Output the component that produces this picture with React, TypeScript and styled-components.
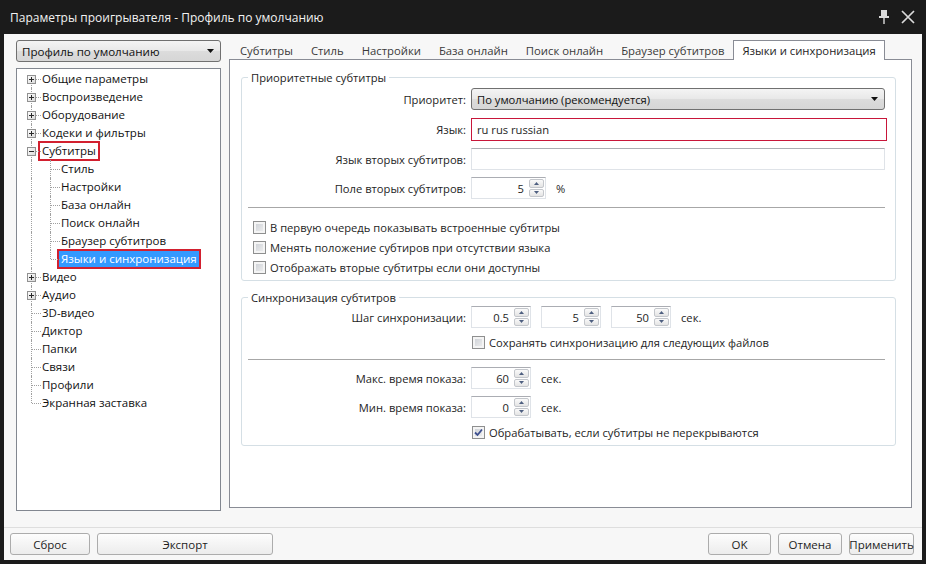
import React from 'react';
import styled, { createGlobalStyle } from 'styled-components';

const GlobalStyle = createGlobalStyle`
  html, body {
    margin: 0;
    padding: 0;
    background: #1b1b1b;
  }
  body {
    font-family: "Open Sans", "Noto Sans", sans-serif;
    font-size: 11.2px;
    color: #1e1e1e;
  }
  * {
    box-sizing: border-box;
  }
`;

const Window = styled.div`
  width: 926px;
  height: 564px;
  background: #1b1b1b;
  display: flex;
  flex-direction: column;
  padding: 0 4px 4px 4px;
`;

const TitleBar = styled.div`
  height: 34px;
  display: flex;
  align-items: center;
  padding: 0 7px 0 6px;
  color: #f2f2f2;
  font-size: 12px;
`;

const TitleText = styled.div`
  flex: 1;
`;

const TitleButtons = styled.div`
  display: flex;
  align-items: center;
  gap: 11px;
`;

const Body = styled.div`
  flex: 1;
  background: #f7f7f7;
  display: flex;
  flex-direction: column;
  min-height: 0;
`;

const Main = styled.div`
  flex: 1;
  display: flex;
  gap: 8px;
  padding: 6px 10px 16px 12px;
  min-height: 0;
`;

const LeftColumn = styled.div`
  width: 205px;
  display: flex;
  flex-direction: column;
  gap: 6px;
`;

const ComboBox = styled.div<{ $size?: number }>`
  height: 22px;
  width: 100%;
  border: 1px solid #707070;
  border-radius: 3px;
  background: linear-gradient(#f4f4f4, #e8e8e8 50%, #dcdcdc 50%, #d6d6d6);
  display: flex;
  align-items: center;
  padding: 0 6px 0 5px;
  font-size: ${p => p.$size || 11.2}px;
  color: #111;
`;

const ComboText = styled.span`
  flex: 1;
`;

const TreeBox = styled.div`
  flex: 1;
  background: #fff;
  border: 1px solid #828790;
  padding: 1px 0 0 5px;
`;

const TreeRow = styled.div`
  height: 18px;
  display: flex;
  align-items: center;
`;

type VLine = 'full' | 'top' | 'bottom' | 'none';

const Guide = styled.span<{ $v: VLine; $h?: boolean }>`
  width: 19px;
  height: 18px;
  flex: none;
  position: relative;

  &::before {
    content: '';
    display: ${p => (p.$v === 'none' ? 'none' : 'block')};
    position: absolute;
    left: 9px;
    top: ${p => (p.$v === 'bottom' ? '9px' : '0')};
    bottom: ${p => (p.$v === 'top' ? '9px' : '0')};
    border-left: 1px dotted #a0a0a0;
  }

  &::after {
    content: '';
    display: ${p => (p.$h ? 'block' : 'none')};
    position: absolute;
    left: 10px;
    right: 0;
    top: 9px;
    border-top: 1px dotted #a0a0a0;
  }
`;

const Expander = styled.svg`
  position: absolute;
  left: 5px;
  top: 5px;
  z-index: 1;
`;

const TreeLabel = styled.span<{ $selected?: boolean; $marked?: boolean }>`
  margin-left: -1px;
  padding: 0 2px;
  line-height: 16px;
  font-size: 11.5px;
  white-space: nowrap;
  color: ${p => (p.$selected ? '#fff' : '#111')};
  background: ${p => (p.$selected ? '#3399ff' : 'transparent')};
  outline: ${p => (p.$selected || p.$marked ? '2px solid #d2202f' : 'none')};
`;

const RightColumn = styled.div`
  flex: 1;
  display: flex;
  flex-direction: column;
  min-width: 0;
`;

const TabBar = styled.div`
  display: flex;
  height: 20px;
  margin: 0 0 -1px 2px;
  position: relative;
  z-index: 1;
`;

const Tab = styled.div<{ $active?: boolean }>`
  height: 20px;
  padding: 0 8px;
  display: flex;
  align-items: center;
  border: 1px solid ${p => (p.$active ? '#898c95' : 'transparent')};
  border-bottom: none;
  background: ${p => (p.$active ? '#fff' : 'transparent')};
  color: ${p => (p.$active ? '#1e1e1e' : '#3a3a3a')};
  font-size: 11.3px;
  white-space: nowrap;
`;

const ContentBox = styled.div`
  flex: 1;
  margin-bottom: 3px;
  background: #fff;
  border: 1px solid #898c95;
  padding: 9px 15px 0 11px;
`;

const Group = styled.fieldset<{ $top?: number }>`
  margin: ${p => p.$top || 0}px 0 0 0;
  padding: 0 10px 3px 6px;
  border: 1px solid #d5dfe5;
  border-radius: 3px;
  min-inline-size: 0;
`;

const Legend = styled.legend`
  padding: 0 3px;
  font-size: 11.2px;
  line-height: 17px;
  color: #1e1e1e;
`;

const FormRow = styled.div<{ $top?: number }>`
  display: grid;
  grid-template-columns: 218px 1fr;
  column-gap: 5px;
  align-items: center;
  height: 22px;
  margin-top: ${p => p.$top || 0}px;
`;

const FieldLabel = styled.span`
  text-align: right;
  white-space: nowrap;
`;

const TextField = styled.div<{ $alert?: boolean }>`
  height: ${p => (p.$alert ? '23px' : '22px')};
  margin-right: ${p => (p.$alert ? '-2px' : '0')};
  border: 1px solid ${p => (p.$alert ? '#c8163a' : '#dfe3e8')};
  border-top-color: ${p => (p.$alert ? '#c8163a' : '#abadb3')};
  background: #fff;
  display: flex;
  align-items: center;
  padding: 0 5px;
`;

const Inline = styled.div`
  display: flex;
  align-items: center;
  gap: 10px;
`;

const Spin = styled.div<{ $width: number }>`
  width: ${p => p.$width}px;
  height: 22px;
  border: 1px solid #dfe3e8;
  border-top-color: #abadb3;
  background: #fff;
  display: flex;
  align-items: center;
  padding: 1px;
`;

const SpinValue = styled.span`
  flex: 1;
  text-align: right;
  padding-right: 5px;
`;

const SpinButtons = styled.div`
  width: 15px;
  height: 100%;
  display: flex;
  flex-direction: column;
  gap: 1px;
`;

const SpinButton = styled.div`
  flex: 1;
  border: 1px solid #c3c6cb;
  border-radius: 2px;
  background: linear-gradient(#fafafa, #e4e4e4);
  display: flex;
  align-items: center;
  justify-content: center;
`;

const Unit = styled.span``;

const Separator = styled.div<{ $top: number }>`
  margin-top: ${p => p.$top}px;
  border-top: 1px solid #a7a7a7;
`;

const CheckList = styled.div<{ $top: number }>`
  padding-top: ${p => p.$top}px;
`;

const CheckRow = styled.div`
  height: 20px;
  display: flex;
  align-items: center;
  padding-left: 5px;
`;

const CheckSlot = styled.div<{ $top?: number }>`
  display: grid;
  grid-template-columns: 218px 1fr;
  column-gap: 6px;
  height: 20px;
  align-items: center;
  margin-top: ${p => p.$top || 0}px;
`;

const CheckBox = styled.span`
  width: 13px;
  height: 13px;
  flex: none;
  border: 1px solid #8e8f8f;
  box-shadow: inset 0 0 0 2px #f4f4f4;
  background: linear-gradient(135deg, #c9cdd3, #f2f2f2);
  display: flex;
  align-items: center;
  justify-content: center;
`;

const CheckText = styled.span`
  display: flex;
  align-items: center;
  gap: 4px;
  white-space: nowrap;
`;

const Footer = styled.div`
  height: 33px;
  border-top: 1px solid #dedede;
  display: flex;
  align-items: center;
  gap: 7px;
  padding: 0 8px 0 6px;
`;

const Button = styled.div<{ $width: number }>`
  width: ${p => p.$width}px;
  height: 22px;
  border: 1px solid #acacac;
  border-radius: 3px;
  background: linear-gradient(#fdfdfd, #ececec);
  display: flex;
  align-items: center;
  justify-content: center;
  font-size: 11.5px;
  color: #1e1e1e;
`;

const Spacer = styled.div`
  flex: 1;
`;

const DownArrow = () => (
  <svg width="7" height="4" viewBox="0 0 7 4">
    <path d="M0 0 H7 L3.5 4 Z" fill="#111" />
  </svg>
);

const SpinArrow = ({ up }: { up?: boolean }) => (
  <svg width="5" height="3" viewBox="0 0 5 3">
    <path d={up ? 'M0 3 L2.5 0 L5 3 Z' : 'M0 0 L2.5 3 L5 0 Z'} fill="#4e5f80" />
  </svg>
);

const CheckMark = () => (
  <svg width="9" height="9" viewBox="0 0 9 9">
    <path d="M1 4.5 L3.5 7 L8 1.5" stroke="#3d4f8f" strokeWidth="1.8" fill="none" />
  </svg>
);

const ExpandBox = ({ open }: { open?: boolean }) => (
  <Expander width="9" height="9" viewBox="0 0 9 9">
    <defs>
      <linearGradient id="exp" x1="0" y1="0" x2="1" y2="1">
        <stop offset="0" stopColor="#ffffff" />
        <stop offset="1" stopColor="#d8d8d8" />
      </linearGradient>
    </defs>
    <rect x="0.5" y="0.5" width="8" height="8" fill="url(#exp)" stroke="#919191" />
    <path d="M2 4.5 H7" stroke="#2a2a2a" />
    {!open && <path d="M4.5 2 V7" stroke="#2a2a2a" />}
  </Expander>
);

const PinIcon = () => (
  <svg width="12" height="16" viewBox="0 0 12 16">
    <rect x="3" y="1" width="6" height="6" fill="#dadada" />
    <rect x="1" y="7" width="10" height="2" fill="#dadada" />
    <rect x="5.3" y="9" width="1.4" height="6" fill="#dadada" />
  </svg>
);

const CloseIcon = () => (
  <svg width="14" height="14" viewBox="0 0 14 14">
    <path d="M1 1 L13 13 M13 1 L1 13" stroke="#dadada" strokeWidth="1.7" />
  </svg>
);

interface TreeItem {
  label: string;
  level: 0 | 1;
  box?: 'plus' | 'minus';
  first?: boolean;
  last?: boolean;
  selected?: boolean;
  marked?: boolean;
}

const tree: TreeItem[] = [
  { label: 'Общие параметры', level: 0, box: 'plus', first: true },
  { label: 'Воспроизведение', level: 0, box: 'plus' },
  { label: 'Оборудование', level: 0, box: 'plus' },
  { label: 'Кодеки и фильтры', level: 0, box: 'plus' },
  { label: 'Субтитры', level: 0, box: 'minus', marked: true },
  { label: 'Стиль', level: 1 },
  { label: 'Настройки', level: 1 },
  { label: 'База онлайн', level: 1 },
  { label: 'Поиск онлайн', level: 1 },
  { label: 'Браузер субтитров', level: 1 },
  { label: 'Языки и синхронизация', level: 1, selected: true, last: true },
  { label: 'Видео', level: 0, box: 'plus' },
  { label: 'Аудио', level: 0, box: 'plus' },
  { label: '3D-видео', level: 0 },
  { label: 'Диктор', level: 0 },
  { label: 'Папки', level: 0 },
  { label: 'Связи', level: 0 },
  { label: 'Профили', level: 0 },
  { label: 'Экранная заставка', level: 0, last: true },
];

const tabs = [
  'Субтитры',
  'Стиль',
  'Настройки',
  'База онлайн',
  'Поиск онлайн',
  'Браузер субтитров',
  'Языки и синхронизация',
];

const SpinBox = ({ value, width }: { value: string; width: number }) => (
  <Spin $width={width}>
    <SpinValue>{value}</SpinValue>
    <SpinButtons>
      <SpinButton>
        <SpinArrow up />
      </SpinButton>
      <SpinButton>
        <SpinArrow />
      </SpinButton>
    </SpinButtons>
  </Spin>
);

const Check = ({ label, checked }: { label: string; checked?: boolean }) => (
  <CheckText>
    <CheckBox>{checked && <CheckMark />}</CheckBox>
    {label}
  </CheckText>
);

const TreeNode = ({ item }: { item: TreeItem }) => {
  const rootV: VLine = item.first ? 'bottom' : item.level === 0 && item.last ? 'top' : 'full';
  return (
    <TreeRow>
      {item.level === 0 ? (
        <Guide $v={rootV} $h>
          {item.box && <ExpandBox open={item.box === 'minus'} />}
        </Guide>
      ) : (
        <>
          <Guide $v="full" />
          <Guide $v={item.last ? 'top' : 'full'} $h />
        </>
      )}
      <TreeLabel $selected={item.selected} $marked={item.marked}>
        {item.label}
      </TreeLabel>
    </TreeRow>
  );
};

const App: React.FC = () => {
  return (
    <>
      <GlobalStyle />
      <Window>
        <TitleBar>
          <TitleText>Параметры проигрывателя - Профиль по умолчанию</TitleText>
          <TitleButtons>
            <PinIcon />
            <CloseIcon />
          </TitleButtons>
        </TitleBar>
        <Body>
          <Main>
            <LeftColumn>
              <ComboBox $size={11.6}>
                <ComboText>Профиль по умолчанию</ComboText>
                <DownArrow />
              </ComboBox>
              <TreeBox>
                {tree.map(item => (
                  <TreeNode key={item.label} item={item} />
                ))}
              </TreeBox>
            </LeftColumn>
            <RightColumn>
              <TabBar>
                {tabs.map((t, i) => (
                  <Tab key={t} $active={i === tabs.length - 1}>
                    {t}
                  </Tab>
                ))}
              </TabBar>
              <ContentBox>
                <Group>
                  <Legend>Приоритетные субтитры</Legend>
                  <FormRow $top={2}>
                    <FieldLabel>Приоритет:</FieldLabel>
                    <ComboBox>
                      <ComboText>По умолчанию (рекомендуется)</ComboText>
                      <DownArrow />
                    </ComboBox>
                  </FormRow>
                  <FormRow $top={8}>
                    <FieldLabel>Язык:</FieldLabel>
                    <TextField $alert>ru rus russian</TextField>
                  </FormRow>
                  <FormRow $top={8}>
                    <FieldLabel>Язык вторых субтитров:</FieldLabel>
                    <TextField />
                  </FormRow>
                  <FormRow $top={7}>
                    <FieldLabel>Поле вторых субтитров:</FieldLabel>
                    <Inline>
                      <SpinBox value="5" width={75} />
                      <Unit>%</Unit>
                    </Inline>
                  </FormRow>
                  <Separator $top={8} />
                  <CheckList $top={9}>
                    <CheckRow>
                      <Check label="В первую очередь показывать встроенные субтитры" />
                    </CheckRow>
                    <CheckRow>
                      <Check label="Менять положение субтиров при отсутствии языка" />
                    </CheckRow>
                    <CheckRow>
                      <Check label="Отображать вторые субтитры если они доступны" />
                    </CheckRow>
                  </CheckList>
                </Group>

                <Group $top={8}>
                  <Legend>Синхронизация субтитров</Legend>
                  <FormRow>
                    <FieldLabel>Шаг синхронизации:</FieldLabel>
                    <Inline>
                      <SpinBox value="0.5" width={60} />
                      <SpinBox value="5" width={60} />
                      <SpinBox value="50" width={60} />
                      <Unit>сек.</Unit>
                    </Inline>
                  </FormRow>
                  <CheckSlot $top={4}>
                    <span />
                    <Check label="Сохранять синхронизацию для следующих файлов" />
                  </CheckSlot>
                  <Separator $top={7} />
                  <FormRow $top={7}>
                    <FieldLabel>Макс. время показа:</FieldLabel>
                    <Inline>
                      <SpinBox value="60" width={60} />
                      <Unit>сек.</Unit>
                    </Inline>
                  </FormRow>
                  <FormRow $top={7}>
                    <FieldLabel>Мин. время показа:</FieldLabel>
                    <Inline>
                      <SpinBox value="0" width={60} />
                      <Unit>сек.</Unit>
                    </Inline>
                  </FormRow>
                  <CheckSlot $top={4}>
                    <span />
                    <Check label="Обрабатывать, если субтитры не перекрываются" checked />
                  </CheckSlot>
                </Group>
              </ContentBox>
            </RightColumn>
          </Main>
          <Footer>
            <Button $width={80}>Сброс</Button>
            <Button $width={176}>Экспорт</Button>
            <Spacer />
            <Button $width={63}>OK</Button>
            <Button $width={64}>Отмена</Button>
            <Button $width={65}>Применить</Button>
          </Footer>
        </Body>
      </Window>
    </>
  );
};

export default App;
